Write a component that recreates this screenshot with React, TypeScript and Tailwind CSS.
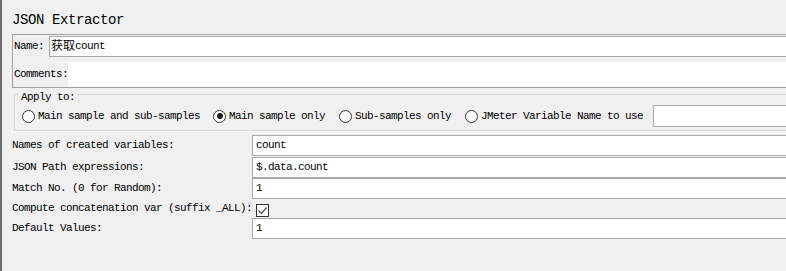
const Radio = ({ checked, label }: { checked?: boolean; label: string }) => (
  <label className="flex items-center gap-[3px]">
    <span className="w-[13px] h-[13px] rounded-full border border-[#333] bg-white flex items-center justify-center">
      {checked && <span className="w-[6px] h-[6px] rounded-full bg-[#222]" />}
    </span>
    <span>{label}</span>
  </label>
);

const Field = ({ value }: { value: string }) => (
  <div className="h-[21px] flex-1 -mr-4 bg-white border border-[#a8a8a8] flex items-center pl-[3px] text-black">
    {value}
  </div>
);

export default function App() {
  return (
    <div className="w-[786px] h-[271px] overflow-hidden bg-[#f0f0f0] border-l-2 border-[#6b6b6b] text-black text-[11px] tracking-[-0.6px] font-[family-name:'Liberation_Mono','Noto_Sans_CJK_SC',monospace]">
      {/* title */}
      <div className="h-[34px] pl-[10px] pt-[12px] text-[14px] leading-[16px] tracking-[-0.4px]">
        JSON Extractor
      </div>

      {/* name / comments */}
      <div className="ml-[10px] -mr-4 h-[54px] border border-[#a0a0a0] pt-[1px] pl-[1px]">
        <div className="flex items-center h-[21px]">
          <span className="w-[35px]">Name:</span>
          <div className="flex-1 h-[21px] bg-white border border-[#a8a8a8] flex items-center pl-[1px]">
            <span className="text-[12px] tracking-normal">获取</span>
            <span>count</span>
          </div>
        </div>
        <div className="flex items-center h-[25px] mt-[5px]">
          <span className="w-[54px]">Comments:</span>
          <div className="flex-1 h-[25px] bg-white" />
        </div>
      </div>

      {/* apply to */}
      <div className="relative ml-[12px] -mr-4 mt-[6px] h-[37px] border border-[#d5d5d5] shadow-[1px_1px_0_#ffffff]">
        <span className="absolute left-[4px] -top-[4px] leading-[12px] px-[2px] bg-[#f0f0f0]">Apply to:</span>
        <div className="flex items-center h-[22px] mt-[10px] pl-[7px]">
          <Radio label="Main sample and sub-samples" />
          <div className="w-[13px]" />
          <Radio checked label="Main sample only" />
          <div className="w-[14px]" />
          <Radio label="Sub-samples only" />
          <div className="w-[14px]" />
          <Radio label="JMeter Variable Name to use" />
          <div className="w-[10px]" />
          <div className="h-[22px] flex-1 bg-white border border-[#a8a8a8]" />
        </div>
      </div>

      {/* rows */}
      <div className="mt-[4px] flex flex-col">
        <div className="flex items-center h-[21px]">
          <span className="w-[250px] pl-[10px]">Names of created variables:</span>
          <Field value="count" />
        </div>
        <div className="flex items-center h-[21px] mt-[1px]">
          <span className="w-[250px] pl-[10px]">JSON Path expressions:</span>
          <Field value="$.data.count" />
        </div>
        <div className="flex items-center h-[21px]">
          <span className="w-[250px] pl-[10px]">Match No. (0 for Random):</span>
          <Field value="1" />
        </div>
        <div className="flex items-center h-[19px]">
          <span className="w-[254px] pl-[10px]">Compute concatenation var (suffix _ALL):</span>
          <span className="w-[13px] h-[13px] mt-[3px] border border-[#333] bg-white flex items-center justify-center">
            <svg width="11" height="11" viewBox="0 0 11 11">
              <polyline points="1.5,5.5 4.5,8.5 9.5,2.5" fill="none" stroke="#555" strokeWidth="1.2" />
            </svg>
          </span>
        </div>
        <div className="flex items-center h-[21px]">
          <span className="w-[250px] pl-[10px]">Default Values:</span>
          <Field value="1" />
        </div>
      </div>
    </div>
  );
}
